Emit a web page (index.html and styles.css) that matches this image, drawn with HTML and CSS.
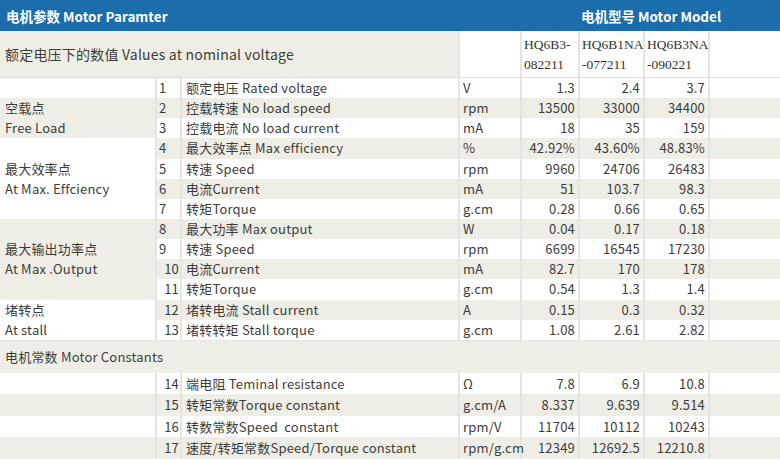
FILE: index.html
```html
<!DOCTYPE html>
<html lang="zh">
<head>
<meta charset="utf-8">
<title>Motor Parameters</title>
<link rel="stylesheet" href="styles.css">
</head>
<body>
<table class="spec">
  <colgroup>
    <col class="c-label"><col class="c-num"><col class="c-desc"><col class="c-unit">
    <col class="c-v1"><col class="c-v2"><col class="c-v3"><col class="c-last">
  </colgroup>
  <tr class="head">
    <th colspan="4" class="h-left">电机参数 Motor Paramter</th>
    <th colspan="4" class="h-right">电机型号 Motor Model</th>
  </tr>
  <tr class="models">
    <td colspan="3" class="nominal">额定电压下的数值 Values at nominal voltage</td>
    <td class="blank"></td>
    <td class="model">HQ6B3-<br>082211</td>
    <td class="model">HQ6B1NA<br>-077211</td>
    <td class="model">HQ6B3NA<br>-090221</td>
    <td class="blank"></td>
  </tr>
  <tr class="r first odd"><td class="lbl g-w"></td><td class="num">1</td><td class="desc">额定电压 Rated voltage</td><td class="unit">V</td><td class="val">1.3</td><td class="val">2.4</td><td class="val">3.7</td><td></td></tr>
  <tr class="r even"><td class="lbl g-b">空载点</td><td class="num">2</td><td class="desc">控载转速 No load speed</td><td class="unit">rpm</td><td class="val">13500</td><td class="val">33000</td><td class="val">34400</td><td></td></tr>
  <tr class="r odd"><td class="lbl g-b">Free Load</td><td class="num">3</td><td class="desc">控载电流 No load current</td><td class="unit">mA</td><td class="val">18</td><td class="val">35</td><td class="val">159</td><td></td></tr>
  <tr class="r even"><td class="lbl g-w"></td><td class="num">4</td><td class="desc">最大效率点 Max efficiency</td><td class="unit">%</td><td class="val">42.92%</td><td class="val">43.60%</td><td class="val">48.83%</td><td></td></tr>
  <tr class="r odd"><td class="lbl g-w">最大效率点</td><td class="num">5</td><td class="desc">转速 Speed</td><td class="unit">rpm</td><td class="val">9960</td><td class="val">24706</td><td class="val">26483</td><td></td></tr>
  <tr class="r even"><td class="lbl g-w">At Max. Effciency</td><td class="num">6</td><td class="desc">电流Current</td><td class="unit">mA</td><td class="val">51</td><td class="val">103.7</td><td class="val">98.3</td><td></td></tr>
  <tr class="r odd"><td class="lbl g-w"></td><td class="num">7</td><td class="desc">转矩Torque</td><td class="unit">g.cm</td><td class="val">0.28</td><td class="val">0.66</td><td class="val">0.65</td><td></td></tr>
  <tr class="r even"><td class="lbl g-b"></td><td class="num">8</td><td class="desc">最大功率 Max output</td><td class="unit">W</td><td class="val">0.04</td><td class="val">0.17</td><td class="val">0.18</td><td></td></tr>
  <tr class="r odd"><td class="lbl g-b">最大输出功率点</td><td class="num">9</td><td class="desc">转速 Speed</td><td class="unit">rpm</td><td class="val">6699</td><td class="val">16545</td><td class="val">17230</td><td></td></tr>
  <tr class="r even"><td class="lbl g-b">At Max .Output</td><td class="num n2">10</td><td class="desc">电流Current</td><td class="unit">mA</td><td class="val">82.7</td><td class="val">170</td><td class="val">178</td><td></td></tr>
  <tr class="r odd"><td class="lbl g-b"></td><td class="num n2">11</td><td class="desc">转矩Torque</td><td class="unit">g.cm</td><td class="val">0.54</td><td class="val">1.3</td><td class="val">1.4</td><td></td></tr>
  <tr class="r even"><td class="lbl g-w">堵转点</td><td class="num n2">12</td><td class="desc">堵转电流 Stall current</td><td class="unit">A</td><td class="val">0.15</td><td class="val">0.3</td><td class="val">0.32</td><td></td></tr>
  <tr class="r odd"><td class="lbl g-w">At stall</td><td class="num n2">13</td><td class="desc">堵转转矩 Stall torque</td><td class="unit">g.cm</td><td class="val">1.08</td><td class="val">2.61</td><td class="val">2.82</td><td></td></tr>
  <tr class="section"><td colspan="8">电机常数 Motor Constants</td></tr>
  <tr class="k odd"><td class="lbl"></td><td class="num n2">14</td><td class="desc">端电阻 Teminal resistance</td><td class="unit">Ω</td><td class="val">7.8</td><td class="val">6.9</td><td class="val">10.8</td><td></td></tr>
  <tr class="k even"><td class="lbl"></td><td class="num n2">15</td><td class="desc">转矩常数Torque constant</td><td class="unit">g.cm/A</td><td class="val">8.337</td><td class="val">9.639</td><td class="val">9.514</td><td></td></tr>
  <tr class="k odd"><td class="lbl"></td><td class="num n2">16</td><td class="desc">转数常数Speed&nbsp; constant</td><td class="unit">rpm/V</td><td class="val">11704</td><td class="val">10112</td><td class="val">10243</td><td></td></tr>
  <tr class="k even"><td class="lbl"></td><td class="num n2">17</td><td class="desc">速度/转矩常数Speed/Torque constant</td><td class="unit">rpm/g.cm</td><td class="val">12349</td><td class="val">12692.5</td><td class="val">12210.8</td><td></td></tr>
</table>
</body>
</html>
```

FILE: styles.css
```css
html, body {
  margin: 0;
  padding: 0;
  background: #ffffff;
}
body {
  width: 780px;
  height: 460px;
  overflow: hidden;
  font-family: "Noto Sans CJK SC", "Noto Sans", sans-serif;
  color: #3c3c3c;
  font-size: 13px;
  letter-spacing: 0.2px;
}
.spec {
  width: 780px;
  table-layout: fixed;
  border-collapse: separate;
  border-spacing: 0;
}
.c-label { width: 157px; }
.c-num { width: 25px; }
.c-desc { width: 278px; }
.c-unit { width: 62px; }
.c-v1 { width: 58px; }
.c-v2 { width: 65px; }
.c-v3 { width: 65px; }
.c-last { width: 70px; }

.spec td, .spec th {
  padding: 0;
  white-space: nowrap;
  overflow: visible;
  vertical-align: middle;
  line-height: 16px;
}

/* header */
.head th {
  height: 31px;
  background: #1c6dab;
  color: #ffffff;
  font-weight: 700;
  font-size: 13.5px;
  letter-spacing: 0;
}
.h-left { text-align: left; padding-left: 6px !important; }
.h-right { text-align: center; }

/* models row */
.models td {
  height: 44px;
  background: #ffffff;
  border-right: 2px solid #e4e4e0;
}
.models td:last-child { border-right: 0; }
.models .nominal {
  background: #efeee6;
  font-size: 14px;
  padding-left: 5px;
}
.models .model {
  font-family: "Liberation Serif", "Noto Sans CJK SC", serif;
  font-size: 13.5px;
  line-height: 20px;
  color: #333333;
  padding-left: 2px;
  padding-top: 2px;
  letter-spacing: 0;
}

/* data rows */
.r td { height: 20.15px; }
.k td { height: 21.5px; }
.r td, .k td {
  border-right: 2px solid #e4e4e0;
}
.r td:last-child, .k td:last-child { border-right: 0; }
.first td { border-top: 1px solid #dcdcd8; }

.odd td { background: #ffffff; }
.even td { background: #efeee6; }
.r td.g-w { background: #ffffff; }
.r td.g-b { background: #efeee6; }

.lbl { padding-left: 5px !important; }
.num { padding-left: 2px !important; }
.num.n2 { text-align: right; padding-left: 0 !important; padding-right: 1px !important; }
.desc { padding-left: 4px !important; }
.unit { padding-left: 3px !important; }
.val { text-align: right; padding-right: 3px !important; }

/* section row */
.section td {
  height: 32px;
  background: #efeee6;
  padding-left: 5px;
  border-top: 1px solid #e6e6e2;
}
```
